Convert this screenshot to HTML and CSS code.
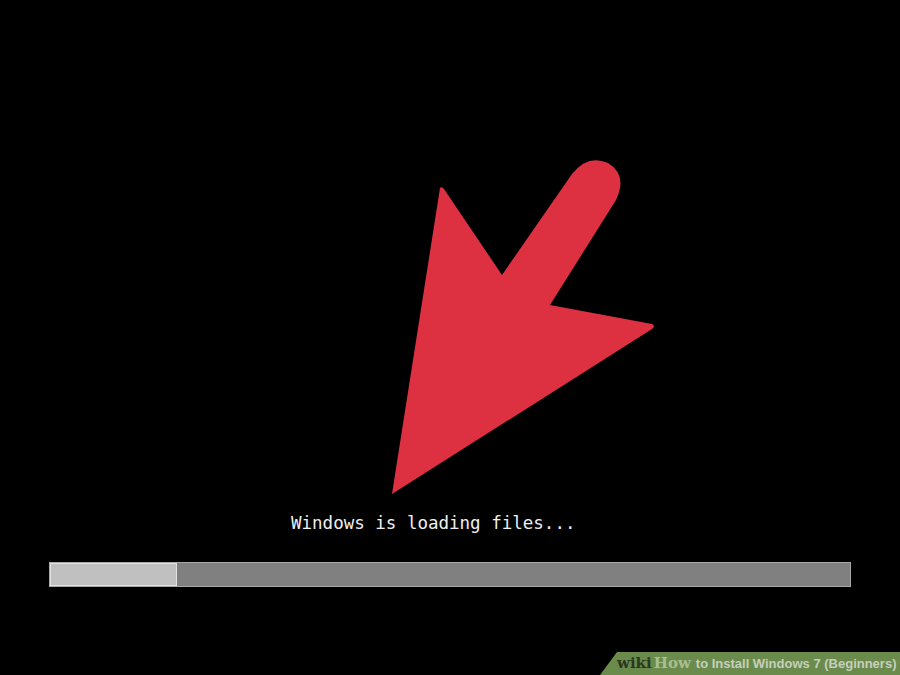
FILE: index.html
```html
<!DOCTYPE html>
<html>
<head>
<meta charset="utf-8">
<link rel="stylesheet" href="styles.css">
</head>
<body>
<div class="screen">
  <svg class="arrow" width="900" height="512" viewBox="0 0 900 512">
    <path d="M392,494 L440,188 Q442,186 444,189 L502,275 L572,174 Q588,154 608,163 Q628,175 616,200 L550,305 L652,324 Q656,326 652,329 Z" fill="#dd3142"/>
  </svg>
  <div class="msg">Windows is loading files...</div>
  <div class="bar">
    <div class="fill"></div>
  </div>
  <div class="banner"><span class="wiki">wiki</span><span class="how">How</span><span class="title">to Install Windows 7 (Beginners)</span></div>
</div>
</body>
</html>
```
FILE: styles.css
```css
html, body {
  margin: 0;
  padding: 0;
  background: #000;
}
.screen {
  position: relative;
  width: 900px;
  height: 675px;
  background: #000;
  overflow: hidden;
  display: flex;
  flex-direction: column;
}
.arrow {
  display: block;
  flex: none;
}
.msg {
  font-family: "DejaVu Sans Mono", "Liberation Mono", monospace;
  font-size: 17.5px;
  line-height: 22px;
  height: 22px;
  color: #efefef;
  padding-left: 291px;
  white-space: pre;
}
.bar {
  margin: 28px 0 0 49px;
  width: 800px;
  height: 23px;
  background: #808080;
  border: 1px solid #a8a8a8;
  display: flex;
}
.fill {
  width: 125px;
  height: 21px;
  background: #c0c0c0;
  border: 1px solid #e2e2e2;
}
.banner {
  position: absolute;
  right: 0;
  bottom: 0;
  width: 284px;
  height: 23px;
  padding-left: 16px;
  background: #6b8b4d;
  clip-path: polygon(17px 0, 100% 0, 100% 100%, 0 100%);
  display: flex;
  align-items: baseline;
  line-height: 23px;
  white-space: nowrap;
}
.wiki {
  font-family: "DejaVu Serif", "Liberation Serif", serif;
  font-weight: bold;
  font-size: 15px;
  color: #2a3820;
  margin-left: 1px;
}
.how {
  font-family: "DejaVu Serif", "Liberation Serif", serif;
  font-weight: bold;
  font-size: 15px;
  color: #a7c08e;
  margin-left: 2px;
}
.title {
  font-family: "Liberation Sans", Arial, sans-serif;
  font-weight: bold;
  font-size: 13px;
  color: #c5d0bb;
  margin-left: 5px;
}
```
